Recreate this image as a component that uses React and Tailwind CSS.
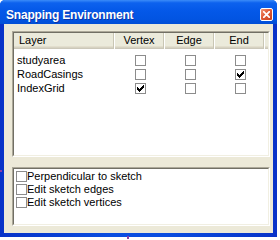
import React from "react";

function Check() {
  const px = [
    [6, 0],
    [5, 1], [6, 1],
    [0, 2], [4, 2], [5, 2], [6, 2],
    [0, 3], [1, 3], [3, 3], [4, 3], [5, 3],
    [0, 4], [1, 4], [2, 4], [3, 4], [4, 4],
    [1, 5], [2, 5], [3, 5],
    [2, 6],
  ];
  const d = px.map(([x, y]) => `M${x} ${y}h1v1h-1z`).join("");
  return (
    <svg width="7" height="7" viewBox="0 0 7 7" shapeRendering="crispEdges">
      <path d={d} fill="#000" />
    </svg>
  );
}

function Box({ checked }) {
  return (
    <div className="w-[11px] h-[11px] shrink-0 border border-[#8c8c8c] bg-white flex items-center justify-center">
      {checked && <Check />}
    </div>
  );
}

function Sunken({ className, children }) {
  return (
    <div
      className={
        "border border-t-[#aca899] border-l-[#aca899] border-b-white border-r-white " +
        className
      }
    >
      <div className="h-full border border-t-[#716f64] border-l-[#716f64] border-b-[#f1efe2] border-r-[#f1efe2] bg-white">
        {children}
      </div>
    </div>
  );
}

const headShadow =
  "shadow-[inset_0_-1px_0_#cbc7b8,inset_0_-2px_0_#d6d2c2,inset_0_-3px_0_#e2decd]";

const rows = [
  { name: "studyarea", v: false, e: false, n: false },
  { name: "RoadCasings", v: false, e: false, n: true },
  { name: "IndexGrid", v: true, e: false, n: false },
];

const options = [
  "Perpendicular to sketch",
  "Edit sketch edges",
  "Edit sketch vertices",
];

export default function App() {
  return (
    <div className="w-[280px] h-[240px] bg-white relative font-['Liberation_Sans',Arial,sans-serif] text-[11px] text-black overflow-hidden">
      <div className="w-[277px] h-[237px] flex flex-col rounded-t-[5px] overflow-hidden bg-[#0555e4]">
        {/* title bar */}
        <div className="h-[24px] flex justify-between pl-[6px] pr-[4px] bg-[linear-gradient(180deg,#3b8cf8_0%,#0d62ee_12%,#0458e8_45%,#0254e2_80%,#024fd6_100%)]">
          <span className="pt-[9px] leading-[12px] text-[12px] font-bold tracking-[-0.2px] text-white [text-shadow:1px_1px_0_#0b35a8]">
            Snapping Environment
          </span>
          <div className="mt-[8px] w-[13px] h-[13px] rounded-[2px] border border-white bg-[linear-gradient(135deg,#f09a7c_0%,#e2603c_40%,#c8401e_100%)] flex items-center justify-center">
            <svg width="7" height="7" viewBox="0 0 7 7">
              <path d="M0.8 0.8L6.2 6.2M6.2 0.8L0.8 6.2" stroke="#fff" strokeWidth="1.8" strokeLinecap="square" />
            </svg>
          </div>
        </div>
        {/* frame + body */}
        <div className="flex-1 flex px-[4px] pb-[4px] bg-[linear-gradient(90deg,#0832c8_0%,#0a4de0_40%,#0a4de0_60%,#0832c8_100%)]">
          <div className="flex-1 bg-[#ece9d8] pt-[7px] pl-[8px] pr-[3px] pb-[7px] flex flex-col gap-[10px]">
            <Sunken className="h-[126px]">
              <div className="flex h-[16px]">
                <div className={"w-[100px] h-full bg-[#ebeadb] pl-[5px] leading-[15px] border-r border-r-[#c9c6b4] " + headShadow}>
                  Layer
                </div>
                {["Vertex", "Edge", "End"].map((h) => (
                  <div
                    key={h}
                    className={"w-[50px] h-full bg-[#ebeadb] text-center leading-[15px] border-l border-l-white border-r border-r-[#c9c6b4] " + headShadow}
                  >
                    {h}
                  </div>
                ))}
                <div className={"flex-1 h-full bg-[#ebeadb] border-l border-l-white " + headShadow} />
              </div>
              <div className="pt-[4px] flex flex-col">
                {rows.map((r) => (
                  <div key={r.name} className="h-[14px] flex">
                    <div className="w-[100px] pl-[3px] leading-[14px]">{r.name}</div>
                    {[r.v, r.e, r.n].map((c, i) => (
                      <div key={i} className="w-[50px] pl-[21px] pt-[2px]">
                        <Box checked={c} />
                      </div>
                    ))}
                  </div>
                ))}
              </div>
            </Sunken>
            <Sunken className="h-[59px]">
              <div className="pt-[1px] pl-[2px] flex flex-col">
                {options.map((o) => (
                  <div key={o} className="h-[13px] flex items-center">
                    <Box checked={false} />
                    <span className="leading-[13px]">{o}</span>
                  </div>
                ))}
              </div>
            </Sunken>
          </div>
        </div>
      </div>
      <div className="absolute left-0 top-[170px] w-[2px] h-[2px] bg-[#8a3fa8]" />
      <div className="absolute left-[127px] top-[236px] w-[2px] h-[3px] bg-[#8a3fa8]" />
    </div>
  );
}
